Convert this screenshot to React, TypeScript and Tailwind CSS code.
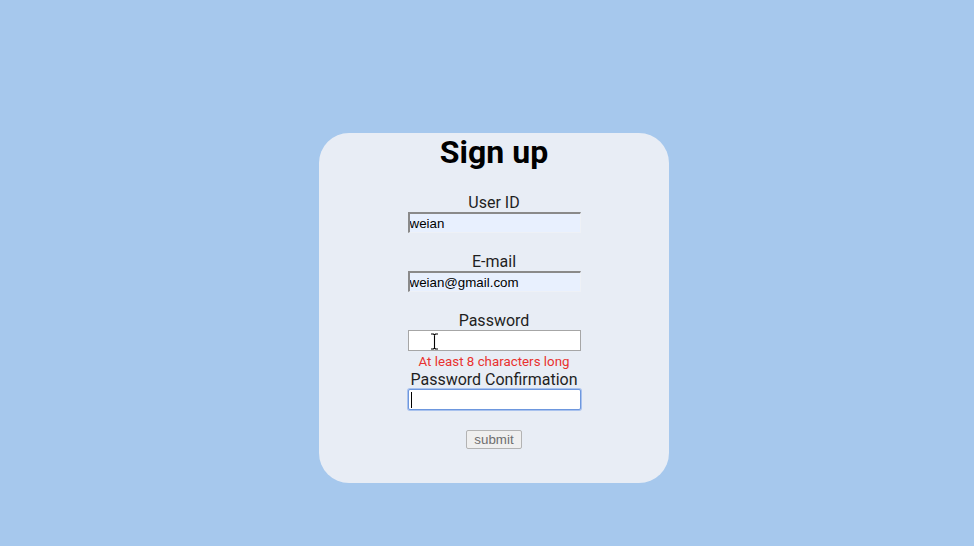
import { useState } from "react";

const Field = ({
  label,
  value,
  autofill,
  error,
  focused,
  ibeam,
}: {
  label: string;
  value: string;
  autofill?: boolean;
  error?: string;
  focused?: boolean;
  ibeam?: boolean;
}) => {
  const [text, setText] = useState(value);
  return (
    <div className="flex flex-col items-center">
      <label className="block text-base leading-[19px] text-[#1f1f1f]">{label}</label>
      <div className="relative">
        <input
          type="text"
          value={text}
          onChange={(e) => setText(e.target.value)}
          className={
            autofill
              ? "block h-[21px] w-[173px] border-t-2 border-l-2 border-r border-b border-t-[#8a8a8a] border-l-[#8a8a8a] border-r-[#eef1f6] border-b-[#eef1f6] bg-[#e8f0fe] px-0 font-['Liberation_Sans',Arial,sans-serif] text-[13.33px] text-black outline-none"
              : focused
              ? "block h-[21px] w-[173px] rounded-[2px] border border-[#6d97de] bg-white px-[2px] font-['Liberation_Sans',Arial,sans-serif] text-[13.33px] text-black outline-none ring-1 ring-[#a9c2ee]"
              : "block h-[21px] w-[173px] border border-[#a6a6a6] bg-white px-[2px] font-['Liberation_Sans',Arial,sans-serif] text-[13.33px] text-black outline-none"
          }
        />
        {focused && (
          <span className="absolute left-[3px] top-[3px] h-[16px] w-px bg-black" />
        )}
        {ibeam && (
          <svg
            className="absolute left-[22px] top-[3px]"
            width="9"
            height="17"
            viewBox="0 0 9 17"
          >
            <path
              d="M1 1h2.5L4.5 2 5.5 1H8M4.5 2v13M1 16h2.5l1-1 1 1H8"
              fill="none"
              stroke="#fff"
              strokeWidth="2.2"
            />
            <path
              d="M1 1h2.5L4.5 2 5.5 1H8M4.5 2v13M1 16h2.5l1-1 1 1H8"
              fill="none"
              stroke="#000"
              strokeWidth="1.1"
            />
          </svg>
        )}
      </div>
      <div className="h-[19px] pt-[2px] text-[13.33px] leading-[18px] text-[#e8322f]">{error}</div>
    </div>
  );
};

export default function App() {
  return (
    <div className="flex min-h-[546px] w-full items-start justify-center bg-[#a6c8ed] pl-[14px] pt-[133px] font-['Roboto',sans-serif]">
      <div className="flex h-[350px] w-[350px] flex-col items-center rounded-[30px] bg-[#e8edf5]">
        <h1 className="mb-[22px] pt-px text-[32px] font-bold leading-[37px] text-black">Sign up</h1>
        <form className="flex flex-col items-center" onSubmit={(e) => e.preventDefault()}>
          <Field label="User ID" value="weian" autofill />
          <Field label="E-mail" value="weian@gmail.com" autofill />
          <Field label="Password" value="" error="At least 8 characters long" ibeam />
          <Field label="Password Confirmation" value="" focused />
          <button
            type="submit"
            disabled
            className="mt-px h-[19px] w-[56px] rounded-[2px] border border-[#b3b3b3] bg-[#efefef] font-['Liberation_Sans',Arial,sans-serif] text-[13.33px] leading-[17px] text-[#6e6e6e]"
          >
            submit
          </button>
        </form>
      </div>
    </div>
  );
}
